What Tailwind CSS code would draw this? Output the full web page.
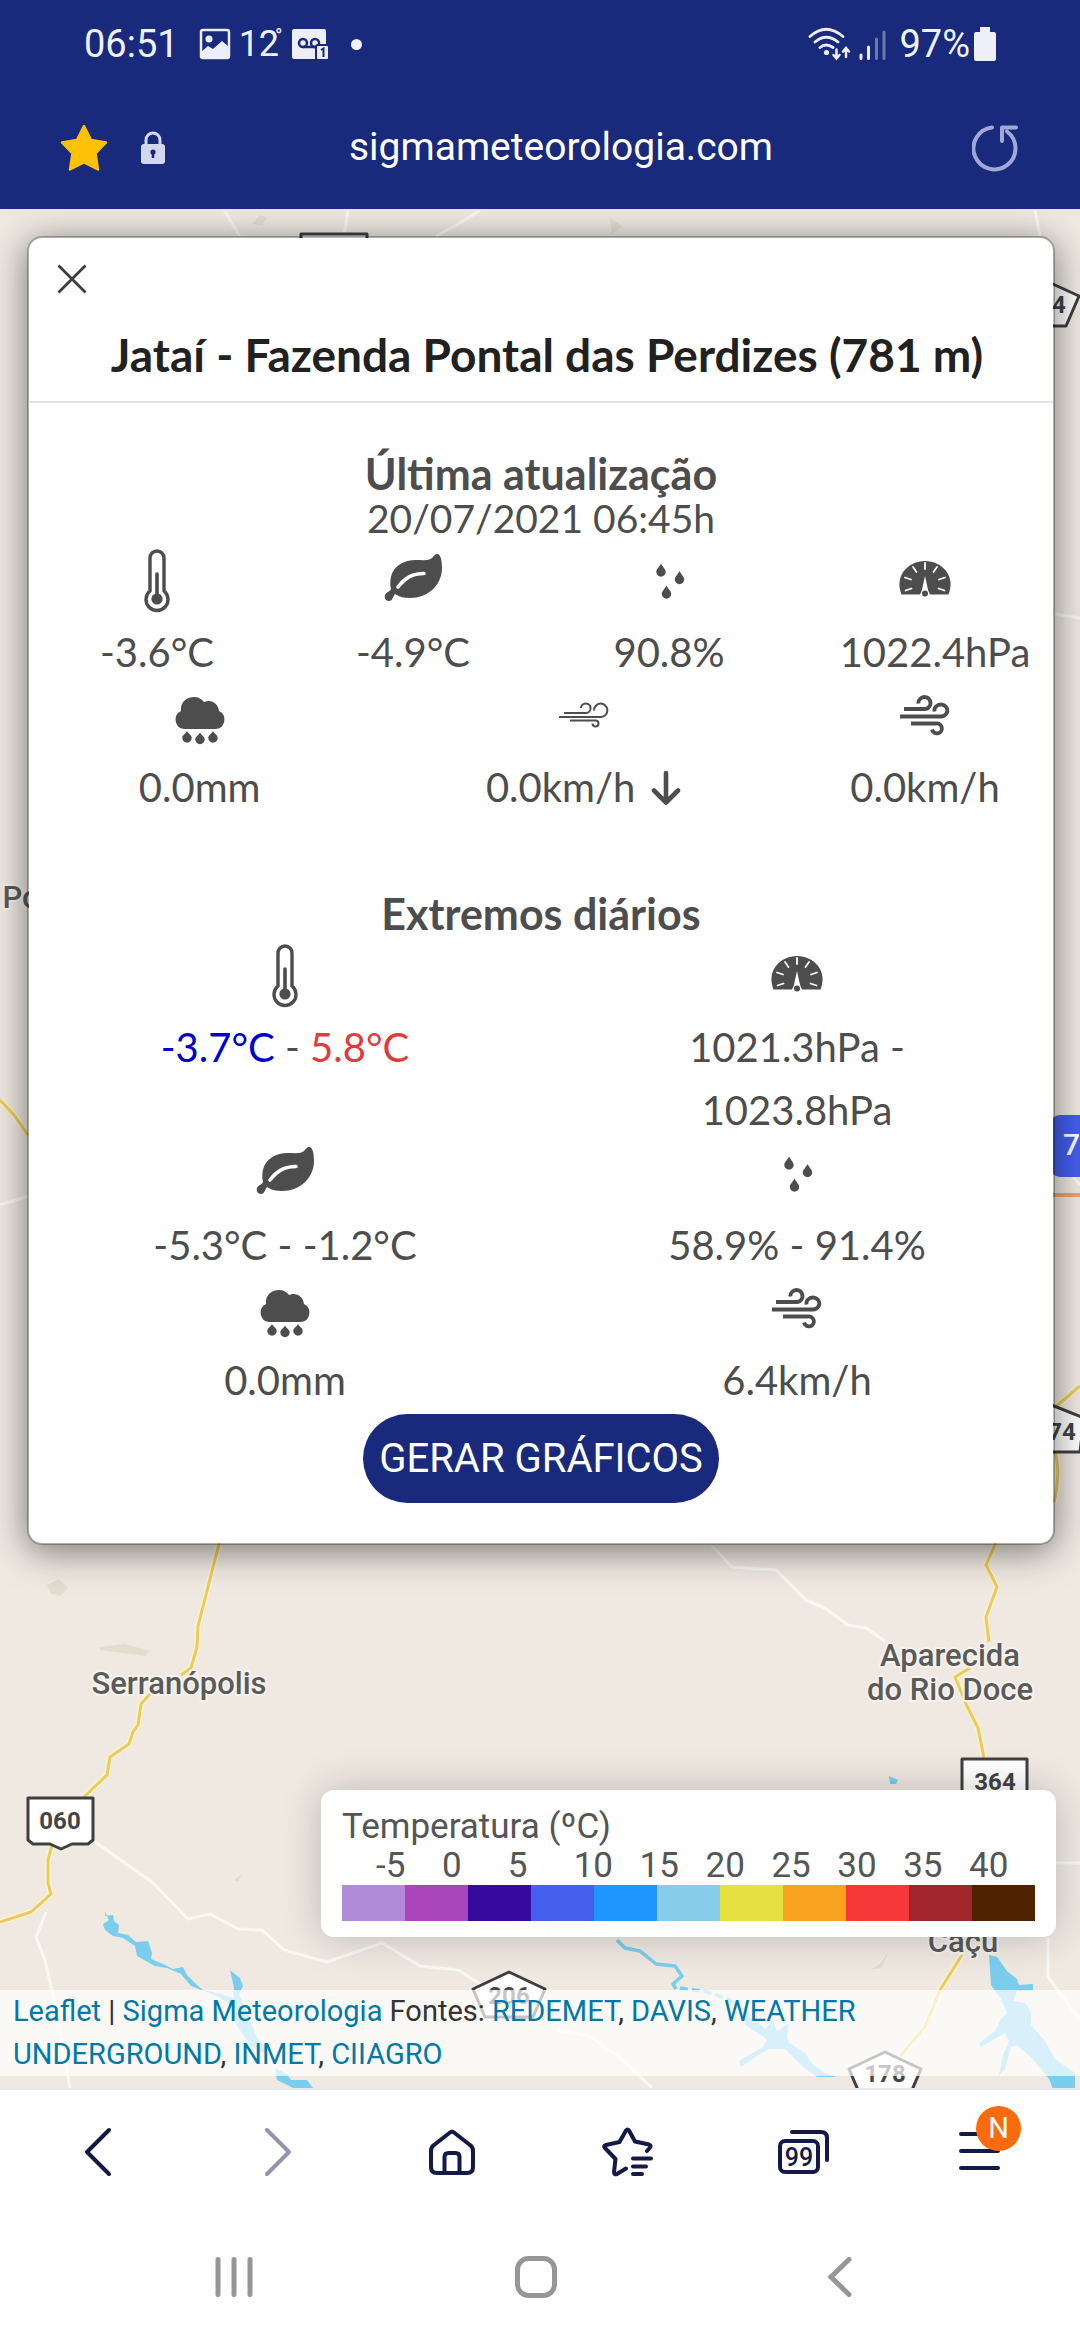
<!DOCTYPE html>
<html lang="pt-BR">
<head>
<meta charset="utf-8">
<meta name="viewport" content="width=device-width, initial-scale=1">
<title>Sigma Meteorologia</title>
<script src="https://cdn.jsdelivr.net/npm/@tailwindcss/browser@4"></script>
</head>
<body class="flex min-h-screen flex-col bg-[#fefefe] font-['Roboto',sans-serif]">

<!-- Shared icon symbols -->
<svg class="hidden" aria-hidden="true">
  <symbol id="thermo" viewBox="0 0 72 72">
    <path d="M29 8a7 7 0 0 1 14 0V41a11 11 0 1 1-14 0Z" transform="translate(0 1)" fill="#fff" stroke="#4d4d4d" stroke-width="3.4"/>
    <circle cx="36" cy="50" r="5.600" fill="#4d4d4d"/>
    <path d="M36 25V49" stroke="#4d4d4d" stroke-width="3.600" stroke-linecap="round"/>
  </symbol>
  <symbol id="leaf" viewBox="0 0 72 72">
    <path d="M60 5c3-.5 5 5 5 14 0 17-14 30-32 30-6 0-10-1-15-4-2 2-2 7-6 7-3 0-5-3-4-6 1-3 5-3 6-6-3-17 6-28 24-29 8 0 14 1 17-2 2-2 3-4 5-4Z" fill="#4d4d4d"/>
    <path d="M21 38C28 29 35 24.500 47 24.500" fill="none" stroke="#fff" stroke-width="3.600" stroke-linecap="round"/>
  </symbol>
  <symbol id="drops" viewBox="0 0 72 72" fill="#4d4d4d">
    <path id="drop" d="M28 14.500c2 4 4.700 5.500 4.700 8.500a4.700 4.700 0 0 1-9.400 0c0-3 2.700-4.500 4.700-8.500Z"/>
    <use href="#drop" x="18.500" y="7.500"/><use href="#drop" x="5.500" y="22"/>
  </symbol>
  <symbol id="gauge" viewBox="0 0 72 72">
    <path d="M12.500 45.500C5 27 19 12 36 12s31 15 23.500 33.500Z" fill="#4d4d4d"/>
    <path d="M36 14v6M24 18l3.500 5M48 18l-3.500 5M16 28.500l6 2M56 28.500l-6 2M16.500 41.500l6-2M55.500 41.500l-6-2" stroke="#fff" stroke-width="1.800" stroke-linecap="round"/>
    <path d="M36 27l3.200 14.500 2 4.500H30.800l2-4.500Z" fill="#fff"/><circle cx="36" cy="44.500" r="3" fill="#4d4d4d"/>
  </symbol>
  <symbol id="rain" viewBox="0 0 72 72" fill="#4d4d4d">
    <path d="M20 45a9.500 9.500 0 0 1-3-18C16 17 24 13 30 13c4 0 8 2 10 5 7-3 14 1 15 9a9.500 9.500 0 0 1-3 18Z"/>
    <path id="rd" d="M23 47c1.500 3 4.700 4 4.700 7a4.700 4.700 0 0 1-9.400 0c0-3 3.200-4 4.700-7Z"/>
    <use href="#rd" x="13" y="1.500"/><use href="#rd" x="26"/>
  </symbol>
  <symbol id="wind" viewBox="0 0 72 72" fill="none" stroke="#4d4d4d" stroke-width="3.800">
    <path d="M15 25H35a6 6 0 1 0-4-10q-2 2-1.500 4.500"/>
    <path d="M11 32.500H52a6.500 6 0 1 0-5-10q-2 2-1.500 5"/>
    <path d="M22 39.500H47a5 5 0 1 1-4 6"/>
  </symbol>
  <symbol id="breeze" viewBox="0 0 72 72" fill="none" stroke="#4d4d4d" stroke-width="2">
    <path d="M16 29H38a4.800 4.800 0 1 0-5-5"/>
    <path d="M11 33H53a6.700 6.700 0 1 0-7-6.500" />
    <path d="M22 36.500H48a3 3 0 1 1-3.500 3"/>
  </symbol>
</svg>

<header class="bg-[#19297c] text-white">
  <div class="flex h-[84px] items-center pr-[84px] pl-[84px] pt-1 text-[38px] leading-none text-[#f0f2ff]">
    <span>06:51</span>
    <svg class="ml-5 size-[32px]" viewBox="0 0 32 32"><rect x="2" y="2" width="28" height="28" rx="2" fill="none" stroke="#eceefa" stroke-width="2.500"/><circle cx="10" cy="11" r="3.500" fill="#eceefa"/><path d="M2 24l7-6 5 3 9-8 7 6v10H2Z" fill="#eceefa"/></svg>
    <span class="ml-2 text-[36px]">12</span><span class="-ml-1 self-start pt-[22px] text-[20px]">°</span>
    <svg class="ml-2 h-[32px] w-[38px]" viewBox="0 0 38 32"><rect x="1" y="1" width="34" height="30" rx="2" fill="#eceefa"/><g fill="none" stroke="#19297c" stroke-width="2.500"><circle cx="12" cy="15" r="4"/><circle cx="24" cy="15" r="4"/><path d="M12 19H24"/></g><rect x="25" y="17" width="13" height="15" rx="2" fill="#eceefa" stroke="#19297c" stroke-width="2"/><path d="M30 22l2.500-1.500V29" fill="none" stroke="#19297c" stroke-width="2"/></svg>
    <span class="ml-[22px] size-[11px] rounded-full bg-[#f0f2ff]"></span>
    <svg class="ml-auto h-[34px] w-[80px]" viewBox="0 0 80 34"><g fill="none" stroke="#eceefa" stroke-width="2.800" stroke-linecap="round"><path d="M3 9.500Q19-5 36 9.500M8 15q11-9.500 23 0M13 20.500q6-5 13 0"/><path d="M29.500 22.500v8M26.500 28l3 3.500 3-3.500M39 30v-8M36 24.500l3-3.500 3 3.500" stroke-width="2.500"/></g><circle cx="19.500" cy="25.500" r="2.600" fill="#eceefa"/><g stroke="#eceefa" stroke-width="3" stroke-linecap="round"><path d="M54 28v3.500M61.500 20v11.500"/><path d="M69.500 12v19.500M77 5v26.500" opacity=".4"/></g></svg>
    <span class="ml-3">97%</span>
    <svg class="ml-1 h-[34px] w-[22px]" viewBox="0 0 22 34"><path d="M6 0h10v5h4q2 0 2 2v25q0 2-2 2H2q-2 0-2-2V7q0-2 2-2h4Z" fill="#eeeff8"/></svg>
  </div>
  <div class="grid h-[125px] grid-cols-[1fr_auto_1fr] items-center pt-[2px] pr-[18px] pl-[60px]">
    <div class="flex items-center gap-8">
      <svg class="size-[48px]" viewBox="0 0 48 48"><path d="M24 2l7 14 15 2.500-10.500 11L38 45.500 24 38.500 10 45.500l2.500-16L2 18.500 17 16Z" fill="#ffc107" stroke="#ffc107" stroke-width="2.500" stroke-linejoin="round"/></svg>
      <svg class="h-[34px] w-[26px]" viewBox="0 0 26 34"><path d="M6 15V9a7 7 0 0 1 14 0v6" fill="none" stroke="#d5d8ec" stroke-width="3"/><rect x="1" y="13" width="24" height="20" rx="3" fill="#d5d8ec"/><circle cx="13" cy="21" r="2.600" fill="#19297c"/><path d="M13 21v6" stroke="#19297c" stroke-width="2.500"/></svg>
    </div>
    <span class="text-[39px]">sigmameteorologia.com</span>
    <button class="mr-[42px] ml-auto size-[48px]" aria-label="Recarregar"><svg viewBox="0 0 48 48" fill="none" stroke="#a0a8d6" stroke-width="4" stroke-linecap="round" stroke-linejoin="round"><path d="M20 3.500A21 21 0 1 0 35 7.500M30 17V3.500H44"/></svg></button>
  </div>
</header>

<main class="relative flex flex-1 flex-col overflow-hidden border-t-2 border-b-2 border-[#e6e6ea] bg-[#efe9e2] pt-[25px] pb-3">
  <!-- Map tiles -->
  <svg class="absolute inset-0 size-full" viewBox="0 211 1080 1877" preserveAspectRatio="xMidYMin slice" font-family="Roboto, sans-serif" aria-hidden="true">
    <rect y="200" width="1080" height="1900" fill="#efe9e2"/>
    <g fill="#e2decf"><path d="M252 224l8-9 7 2-5 8zM47 1585l12-6 9 9-8 8-9-2zM100 1647l24-3 26 7-5 5-45-6zM610 218l12 8-10 8zM888 1952l-8 12-10 6 12-2zM234 1880l8-6-4 8z"/></g>
    <g fill="none" stroke="#faf8f4" stroke-width="3" stroke-linejoin="round">
      <path d="M224 210l16 26M348 210l-4 26M480 210q-20 14-44 26M1035 210l5 26"/>
      <path d="M46 1912L36 1937 45 1960 53 1995 70 2088M95 1842l57 40 36 37 22-5 28 15 24 1 22 20 43 12 55-19 38 23 38 4 22 14M557 2030l33 6 35 26 27 26"/>
      <path d="M712 1546l20 21 44 3 30 30 19 8 23 17 18 3 19 13M1056 1863h24M1048 1937v40l32 43M1055 1155l25 30M0 1205l28-9M1055 614l25 4"/>
    </g>
    <path d="M220 1540L198 1626 197 1647 191 1668 181 1675M151 1693l-10 11-3 21-5 7-4 12-19 13-3 18-23 22M52 1845l-4 15v23l3 11-20 18L0 1922M997 1540l-11 25 11 22-11 30 3 25M970 1668l-15 9 11 27 12 24 6 30M962 1955l-22 35-15 37-25 29M0 1100l14 15 14 20M1080 1386l-26 22M1055 1452q6 20-1 50" fill="none" stroke="#fdf3c8" stroke-width="6" stroke-linejoin="round"/>
    <path d="M220 1540L198 1626 197 1647 191 1668 181 1675M151 1693l-10 11-3 21-5 7-4 12-19 13-3 18-23 22M52 1845l-4 15v23l3 11-20 18L0 1922M997 1540l-11 25 11 22-11 30 3 25M970 1668l-15 9 11 27 12 24 6 30M962 1955l-22 35-15 37-25 29M0 1100l14 15 14 20M1080 1386l-26 22M1055 1452q6 20-1 50" fill="none" stroke="#e9cb66" stroke-width="3" stroke-linejoin="round"/>
    <path d="M1050 1195h30" stroke="#f3a469" stroke-width="4"/>
    <g fill="#7bcdee">
      <path d="M105 1916l8-1 1 6 5 4-1 8 10 2 8 7 12-1 4 12-1 6 14 6 8 4 10-2 4 8 10 10 6 5 18 4 12 4 1-10-4-18 10 8 3 8-4 8 10 24 8 20 12 12-4 4-14-8-14-20-8-22-12-8-26-10-10-12-14-6-12-2-18-10-2-10-12-8-10-2-8-6-2-6 6-4-4-8z"/>
      <path d="M275 2068l12 6 4 6 16 0 6 8h-20l-16-8z"/>
      <path d="M989 1955l8 2 10 14 10 8 2 6 14-1v6l-16 1-4 10 12 2 6 8 0 14 14 16 10 18 20 14v26h-18l-8-20-16-20-16-14-6 2-6 22-6 6 4-20 6-14-4-8-24 14-2-4 16-12 6-12 6-6-6-14-10-14z"/>
      <path d="M745 2015l14 8 6 6 8-8 4 10 12-8-2 14 2 6 10 6 6 4 8 12 12 8 12 4h-20l-14-10-18-18-16 0-14 8-14 10-2-6 24-14 4-8-22-14z"/>
      <path d="M889 1776l9 4-2 4h-6z"/>
    </g>
    <g fill="none" stroke="#7bcdee" stroke-width="3.500" stroke-linejoin="round"><path d="M617 1940l8 8 15 3 16 13 19 2 7 10-9 8 3 5"/><path d="M680 1988l28 4 22 8 18 15" stroke-dasharray="8 4"/></g>
    <g fill="#fff" stroke="#3f3f3f" stroke-width="3" stroke-linejoin="round">
      <path d="M28 1798h65v42l-5 4H72l-11 5-11-5H33l-5-4z"/>
      <path d="M962 1759h65v42h-65z"/>
      <path d="M301 234h66v40h-66z"/>
      <path d="M509 1972l36 17-12 28h-48l-12-28z"/>
      <path d="M885 2052l36 17-12 28h-48l-12-28z"/>
      <path d="M1044 280l35 16-13 30h-30z"/>
      <path d="M1044 1402l40 16-4 34h-40z"/>
    </g>
    <g fill="#444" font-size="24" font-weight="700" text-anchor="middle">
      <text x="60" y="1829">060</text><text x="995" y="1790">364</text><text x="509" y="2004">206</text><text x="885" y="2082">178</text><text x="1059" y="313">4</text><text x="1062" y="1440">74</text>
    </g>
    <g fill="#5a5a5a" font-size="31" font-weight="500" text-anchor="middle" stroke="#f6f2ec" stroke-width="4" paint-order="stroke" stroke-linejoin="round">
      <text x="179" y="1694">Serranópolis</text><text x="950" y="1666">Aparecida</text><text x="950" y="1700">do Rio Doce</text><text x="963" y="1952">Caçu</text><text x="21" y="908">Po</text>
    </g>
    <rect x="1050" y="1115" width="66" height="62" rx="10" fill="#445fee"/>
    <text x="1063" y="1155" fill="#fff" font-size="30" font-weight="500">7</text>
  </svg>

  <!-- Station card -->
  <section class="relative mr-[25px] ml-[27px] rounded-[15px] border-2 border-[#0004] bg-white bg-clip-padding font-['Lato',sans-serif] text-[40px] text-[#4d4d4d] shadow-[0_6px_36px_rgba(0,0,0,0.5)]">
    <header class="border-b-2 border-[#e4e4e4] pb-[14px]">
      <button class="block pt-[26px] pl-[28px]" aria-label="Fechar"><svg class="size-[30px]" viewBox="0 0 30 30" stroke="#3d3d3d" stroke-width="2.800"><path d="M1.500 1.500l27 27M28.500 1.500l-27 27"/></svg></button>
      <h1 class="pt-[29px] pl-3 text-center text-[46px] leading-[64px] font-bold text-[#212121]">Jataí - Fazenda Pontal das Perdizes (781 m)</h1>
    </header>
    <div class="pt-[48px] pb-10 text-center">
      <h2 class="text-[43px] leading-[45px] font-bold">Última atualização</h2>
      <p class="text-[39px] leading-[45px]">20/07/2021 06:45h</p>
      <div class="mt-2 grid grid-cols-12 leading-[63px]">
        <div class="col-span-3"><svg class="mx-auto size-[72px]"><use href="#thermo"/></svg><p>-3.6°C</p></div>
        <div class="col-span-3"><svg class="mx-auto size-[72px]"><use href="#leaf"/></svg><p>-4.9°C</p></div>
        <div class="col-span-3"><svg class="mx-auto size-[72px]"><use href="#drops"/></svg><p>90.8%</p></div>
        <div class="col-span-3"><svg class="mx-auto size-[72px]"><use href="#gauge"/></svg><p class="-mr-5">1022.4hPa</p></div>
        <div class="col-span-4"><svg class="mx-auto size-[72px]"><use href="#rain"/></svg><p>0.0mm</p></div>
        <div class="col-span-5"><svg class="mx-auto size-[72px]"><use href="#breeze"/></svg><p class="flex items-center justify-center gap-4">0.0km/h <svg class="h-[36px] w-[30px]" viewBox="0 0 30 36" fill="none" stroke="#4d4d4d" stroke-width="4.600" stroke-linecap="round" stroke-linejoin="round"><path d="M15 3v29M3 20.500l12 12 12-12"/></svg></p></div>
        <div class="col-span-3"><svg class="mx-auto size-[72px]"><use href="#wind"/></svg><p>0.0km/h</p></div>
      </div>
      <h2 class="mt-[72px] text-[43px] leading-[45px] font-bold">Extremos diários</h2>
      <div class="mt-2 grid grid-cols-2 leading-[63px]">
        <div><svg class="mx-auto size-[72px]"><use href="#thermo"/></svg><p><span class="text-[#0000cd]">-3.7°C</span> - <span class="text-[#e03c3c]">5.8°C</span></p></div>
        <div><svg class="mx-auto size-[72px]"><use href="#gauge"/></svg><p>1021.3hPa -<br>1023.8hPa</p></div>
        <div><svg class="mx-auto size-[72px]"><use href="#leaf"/></svg><p>-5.3°C - -1.2°C</p></div>
        <div><svg class="mx-auto size-[72px]"><use href="#drops"/></svg><p>58.9% - 91.4%</p></div>
        <div><svg class="mx-auto size-[72px]"><use href="#rain"/></svg><p>0.0mm</p></div>
        <div><svg class="mx-auto size-[72px]"><use href="#wind"/></svg><p>6.4km/h</p></div>
      </div>
      <button class="mt-[2px] h-[89px] rounded-full bg-[#19297c] px-4 font-['Roboto',sans-serif] text-[40px] text-white">GERAR GRÁFICOS</button>
    </div>
  </section>

  <!-- Legend -->
  <section class="relative mt-auto mr-6 ml-auto w-[735px] rounded-[13px] bg-white px-[21px] pt-[17px] pb-4 text-[35px] leading-[39px] text-[#555] shadow-[0_0_40px_rgba(0,0,0,0.22)]">
    <h2>Temperatura (ºC)</h2>
    <div class="grid grid-cols-10 pl-[34px]"><span>-5</span><span>0</span><span>5</span><span>10</span><span>15</span><span>20</span><span>25</span><span>30</span><span>35</span><span>40</span></div>
    <div class="grid h-[36px] grid-cols-11">
      <i class="bg-[#b18ad8]"></i><i class="bg-[#aa45bb]"></i><i class="bg-[#370a9f]"></i><i class="bg-[#445fee]"></i><i class="bg-[#1f97ff]"></i><i class="bg-[#87cde9]"></i><i class="bg-[#e4e03f]"></i><i class="bg-[#f9a220]"></i><i class="bg-[#f63838]"></i><i class="bg-[#a3262d]"></i><i class="bg-[#4e2200]"></i>
    </div>
  </section>

  <p class="relative mt-[53px] bg-white/70 px-[13px] text-[29px] leading-[43px] text-[#333]">
    <a href="#" class="text-[#0078a8]">Leaflet</a> | <a href="#" class="text-[#0078a8]">Sigma Meteorologia</a> Fontes: <a href="#" class="text-[#0078a8]">REDEMET</a>, <a href="#" class="text-[#0078a8]">DAVIS</a>, <a href="#" class="text-[#0078a8]">WEATHER<br>UNDERGROUND</a>, <a href="#" class="text-[#0078a8]">INMET</a>, <a href="#" class="text-[#0078a8]">CIIAGRO</a>
  </p>
</main>

<nav class="grid h-[124px] grid-cols-6 items-center px-3" aria-label="Navegador">
  <button class="mx-auto" aria-label="Voltar"><svg class="size-[52px]" viewBox="0 0 52 52" fill="none" stroke="#141a47" stroke-width="4" stroke-linecap="round" stroke-linejoin="round"><path d="M35 4L13 26 35 48"/></svg></button>
  <button class="mx-auto" aria-label="Avançar"><svg class="size-[52px]" viewBox="0 0 52 52" fill="none" stroke="#9495ab" stroke-width="4" stroke-linecap="round" stroke-linejoin="round"><path d="M17 4l22 22-22 22"/></svg></button>
  <button class="mx-auto" aria-label="Início"><svg class="size-[52px]" viewBox="0 0 52 52" fill="none" stroke="#141a47" stroke-width="4" stroke-linejoin="round"><path d="M24 6.500q2-1.500 4 0L44 19q3 2 3 6v16q0 6-6 6H11q-6 0-6-6V25q0-4 3-6ZM18.500 47V31q0-4 4-4h7q4 0 4 4v16"/></svg></button>
  <button class="mx-auto" aria-label="Favoritos"><svg class="size-[52px]" viewBox="0 0 52 52" fill="none" stroke="#141a47" stroke-width="4" stroke-linecap="round" stroke-linejoin="round"><path d="M45 25l3-3.500q1.500-2-1-3L33 15.500 27 4.500q-1.500-2-3 0L17.500 16 4 19q-3 1-1 3l10.500 11L12 46q0 3 3 2l9-5.500M31 32.500H49M31 40.500H44M31 48h9"/></svg></button>
  <button class="mx-auto" aria-label="Abas"><svg class="size-[52px]" viewBox="0 0 52 52" fill="none" stroke="#141a47" stroke-width="4" stroke-linecap="round"><rect x="2" y="15" width="38" height="31" rx="5"/><path d="M14 6H43q6 0 6 6V34"/><text x="21" y="39.500" text-anchor="middle" font-size="25" font-family="Roboto, sans-serif" font-weight="500" fill="#141a47" stroke="none">99</text></svg></button>
  <button class="relative mx-auto" aria-label="Menu"><svg class="size-[52px]" viewBox="0 0 52 52" stroke="#141a47" stroke-width="4" stroke-linecap="round"><path d="M7 8H44M7 25H44M7 42H44"/></svg><span class="absolute -top-[20px] left-[22px] flex size-[45px] items-center justify-center rounded-full bg-[#f96b0d] text-[29px] leading-none text-white">N</span></button>
</nav>
<nav class="grid h-[126px] grid-cols-3 items-center pr-[88px] pl-20" aria-label="Sistema">
  <button class="mx-auto" aria-label="Recentes"><svg class="size-[44px]" viewBox="0 0 44 44" stroke="#969696" stroke-width="5" stroke-linecap="round"><path d="M8 4.500v35M24 4.500v35M40 4.500v35"/></svg></button>
  <button class="mx-auto" aria-label="Tela inicial"><svg class="size-[44px]" viewBox="0 0 44 44" fill="none" stroke="#969696" stroke-width="5"><rect x="3.500" y="3.500" width="37" height="37" rx="11"/></svg></button>
  <button class="mx-auto" aria-label="Retornar"><svg class="size-[44px]" viewBox="0 0 44 44" fill="none" stroke="#969696" stroke-width="5" stroke-linecap="round"><path d="M31 4.500L13 22 31 39.500"/></svg></button>
</nav>
</body>
</html>
